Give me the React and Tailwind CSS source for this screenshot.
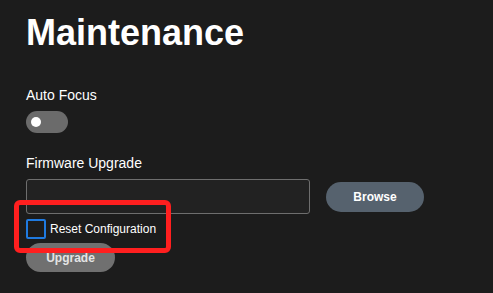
const Toggle = () => (
  <div className="mt-[6px] flex h-[22px] w-[42px] items-center rounded-full bg-[#6b6b6b] pl-[5px]">
    <div className="h-[10px] w-[10px] rounded-full bg-white" />
  </div>
);

export default function App() {
  return (
    <div className="relative min-h-screen bg-[#1c1c1c] px-[26px] pt-[13px] font-['Liberation_Sans',Arial,sans-serif] text-white">
      <h1 className="text-[36px] font-bold leading-[40px]">Maintenance</h1>

      <div className="mt-[32px] text-[14px] leading-5">Auto Focus</div>
      <Toggle />

      <div className="mt-[20px] text-[14px] leading-5">Firmware Upgrade</div>
      <div className="mt-[6px] flex items-center gap-4">
        <div className="h-[35px] w-[284px] rounded-[3px] border border-[#6e6e6e] bg-[#222222]" />
        <button className="h-[30px] w-[98px] rounded-full bg-[#56626e] text-[12px] font-bold text-white">
          Browse
        </button>
      </div>

      <label className="mt-[5px] flex items-center gap-[4px]">
        <span className="h-[20px] w-[20px] rounded-[2px] border-2 border-[#1f7ae0]" />
        <span className="text-[12px] leading-4">Reset Configuration</span>
      </label>

      <button className="mt-[4px] h-[29px] w-[89px] rounded-full bg-[#707070] text-[12px] font-bold text-[#e4e4e4]">
        Upgrade
      </button>

      {/* annotation box */}
      <div className="pointer-events-none absolute left-[14px] top-[200px] h-[53px] w-[157px] rounded-[6px] border-[5px] border-[#ff1f1f]" />
    </div>
  );
}
